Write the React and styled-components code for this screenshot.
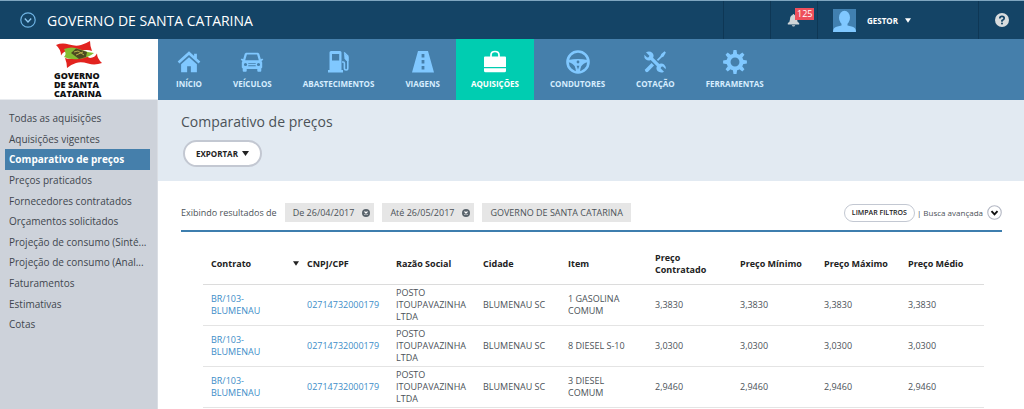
import styled, { createGlobalStyle } from "styled-components";

const COLOR = {
  header: "#144466",
  nav: "#457fab",
  active: "#00cdb1",
  icon: "#80c8ff",
  link: "#3d8dc8",
};

const GlobalStyle = createGlobalStyle`
  * {
    box-sizing: border-box;
  }

  body {
    margin: 0;
    background: #fff;
    color: #4b5258;
    font-family: "Open Sans", "Noto Sans", sans-serif;
    font-size: 10px;
  }

  button {
    font-family: inherit;
    cursor: pointer;
  }

  a {
    text-decoration: none;
  }
`;

const Page = styled.div`
  min-height: 100vh;
  display: flex;
  flex-direction: column;
`;

const Header = styled.header`
  display: flex;
  align-items: stretch;
  height: 39px;
  border-top: 1px solid #7fa6c0;
  background: ${COLOR.header};
  color: #fff;
`;

const IconButton = styled.button`
  display: flex;
  align-items: center;
  justify-content: center;
  padding: 0;
  border: 0;
  background: none;
  color: inherit;
`;

const Organization = styled.div`
  flex: 1;
  display: flex;
  align-items: center;
  gap: 11px;
  padding-left: 20px;
  font-size: 14px;
`;

const HeaderCell = styled.div`
  display: flex;
  align-items: center;
  width: ${(props) => props.$width};
  padding-left: ${(props) => props.$indent || "0"};
  border-left: 1px solid #0e3755;
`;

const BellButton = styled(IconButton)`
  position: relative;
`;

const Badge = styled.span`
  position: absolute;
  top: -5px;
  left: 8px;
  padding: 0 2px;
  background: #ee4f5c;
  color: #fff;
  font-size: 9px;
  line-height: 12px;
`;

const UserButton = styled(IconButton)`
  gap: 7px;
  font-size: 8px;
  font-weight: 700;
`;

const UserName = styled.span`
  padding-left: 4px;
`;

const Top = styled.div`
  display: flex;
  height: 61px;
  background: ${COLOR.nav};
`;

const Logo = styled.div`
  display: flex;
  flex-direction: column;
  align-items: center;
  gap: 2px;
  flex: 0 0 158px;
  padding-top: 1px;
  border-bottom: 1px solid #e8ebef;
  background: #fff;
  color: #111;
  font-size: 9px;
  font-weight: 800;
  line-height: 9px;
`;

const LogoText = styled.div`
  width: 50px;
  white-space: nowrap;
`;

const Nav = styled.nav`
  display: flex;
  gap: 1px;
  padding-left: 3px;
`;

const NavLink = styled.a`
  display: flex;
  flex-direction: column;
  align-items: center;
  gap: 3px;
  padding: 10px 15px 0;
  color: ${(props) => (props.$active ? "#fff" : "#d6edff")};
  font-size: 8px;
  font-weight: 700;
  line-height: 12px;
  background: ${(props) => (props.$active ? COLOR.active : "transparent")};

  svg {
    color: ${(props) => (props.$active ? "#fff" : COLOR.icon)};
  }
`;

const Body = styled.div`
  flex: 1;
  display: flex;
`;

const Sidebar = styled.aside`
  flex: 0 0 158px;
  padding: 8px 7px 0 5px;
  border-right: 1px solid #d9dde3;
  background: #cdd2da;
`;

const SideList = styled.ul`
  display: grid;
  grid-auto-rows: 1fr;
  height: 227px;
  margin: 0;
  padding: 0;
  list-style: none;
`;

const SideItem = styled.li`
  display: flex;
  min-width: 0;
`;

const SideLink = styled.a`
  flex: 1;
  padding: 0 0 0 4px;
  overflow: hidden;
  text-overflow: ellipsis;
  white-space: nowrap;
  line-height: 20px;
  color: ${(props) => (props.$active ? "#fff" : "#3f464e")};
  font-weight: ${(props) => (props.$active ? 700 : 400)};
  background: ${(props) => (props.$active ? COLOR.nav : "transparent")};
`;

const Main = styled.main`
  flex: 1;
  min-width: 0;
`;

const TitleArea = styled.div`
  height: 81px;
  padding: 12px 23px 0;
  background: #e2eaf2;
`;

const Title = styled.h1`
  margin: 0 0 8px;
  font-size: 14px;
  font-weight: 400;
  line-height: 20px;
`;

const PillButton = styled.button`
  height: ${(props) => (props.$small ? "18px" : "27px")};
  padding: ${(props) => (props.$small ? "0 7px" : "0 11px")};
  border: ${(props) => (props.$small ? "1px" : "2px")} solid #c3c8d2;
  border-radius: 14px;
  background: #fff;
  color: #222;
  font-size: ${(props) => (props.$small ? "7px" : "8px")};
  font-weight: ${(props) => (props.$small ? 600 : 700)};
`;

const ExportButton = styled(PillButton)`
  display: flex;
  align-items: center;
  gap: 4px;
  margin-left: 2px;
`;

const Results = styled.section`
  padding: 22px 22px 0 23px;
`;

const Filters = styled.div`
  display: flex;
  align-items: center;
  gap: 8px;
  padding-bottom: 8px;
  border-bottom: 2px solid #3d7eae;
  font-size: 9px;
`;

const Tag = styled.span`
  display: flex;
  align-items: center;
  gap: 8px;
  height: 19px;
  padding: ${(props) => (props.$plain ? "0 8px" : "0 4px 0 8px")};
  background: #e6e6e6;
`;

const FilterActions = styled.div`
  display: flex;
  align-items: center;
  gap: 2px;
  margin-left: auto;
  font-size: 8px;
`;

const SearchButton = styled(IconButton)`
  gap: 4px;
  font-size: 8px;
`;

const TableWrapper = styled.div`
  padding: 12px 18px 0 22px;
`;

const Table = styled.table`
  width: 100%;
  table-layout: fixed;
  border-collapse: separate;
  border-spacing: 0;
  font-size: 9px;
  line-height: 12px;
`;

const HeadCell = styled.th`
  width: ${(props) => props.$width};
  height: 41px;
  padding: 0 0 1px 8px;
  border-bottom: 1px solid #dcdcdc;
  color: #222;
  text-align: left;
  font-weight: 700;
`;

const Sort = styled.span`
  display: flex;
  align-items: center;
  justify-content: space-between;
`;

const Cell = styled.td`
  height: 41px;
  padding: 2px 8px;
  border-bottom: 1px solid #e4e4e4;
`;

const TableLink = styled.a`
  color: ${COLOR.link};
`;

const Svg = ({ viewBox = "0 0 26 26", children }) => (
  <svg width="26" height="26" viewBox={viewBox} fill="currentColor" aria-hidden="true">
    {children}
  </svg>
);

// a bit of air around the wider glyphs
const LOOSE = "-1 -1 28 28";

const Arrow = ({ width = 7, height = 5 }) => (
  <svg width={width} height={height} viewBox="0 0 7 5" fill="currentColor" aria-hidden="true">
    <path d="M0 0h7L3.5 5z" />
  </svg>
);

const HomeIcon = () => (
  <Svg viewBox={LOOSE}>
    <path d="M13 1.500.8 12.500l1.900 2.200L13 5.500l10.300 9.200 1.900-2.200-3.700-3.300V4h-3v2.500z" />
    <path d="M13 7.800 4.500 15.300V24H11v-6.500h4V24h6.500v-8.700z" />
  </Svg>
);

const CarIcon = () => (
  <Svg viewBox={LOOSE}>
    <path
      fillRule="evenodd"
      d="M6.500 3h13l1.300 1 1.700 6 1.500-.8 1.200 1.400-1.900 1.200.7 1.700v5.500l-1 1V22.500a1 1 0 0 1-1 1h-2.300a1 1 0 0 1-1-1v-2H7.300v2a1 1 0 0 1-1 1H4a1 1 0 0 1-1-1V20l-1-1v-5.500l.7-1.700L.8 10.600 2 9.200l1.500.8 1.700-6zM7.500 4.800 5.700 11.200h14.600l-1.800-6.400zM6 14a1.700 1.700 0 1 0 0 3.400A1.700 1.700 0 0 0 6 14zm14 0a1.700 1.700 0 1 0 0 3.400 1.700 1.700 0 0 0 0-3.400zM9 14v1h8v-1zm0 2.500v1h8v-1z"
    />
  </Svg>
);

const FuelIcon = () => (
  <Svg>
    <path fillRule="evenodd" d="M3.500 3.500q0-1.500 1.500-1.500h9q1.500 0 1.500 1.500V21H17v2.500H2V21h1.500zM6 5v6.500h7.200V5z" />
    <path
      d="M16 13h1.200q1.200 0 1.200 1.500v4.800q0 1.700 1.700 1.700t1.700-1.700V7l-3.700-3.500"
      fill="none"
      stroke="currentColor"
      strokeWidth="1.600"
    />
    <path d="M18 4.500 22.500 8v4h-2l-2-2.200z" />
  </Svg>
);

const RoadIcon = () => (
  <Svg>
    <path
      fillRule="evenodd"
      d="M8 2h10l6 21.500H2zM11.600 5v3.500h2.800V5zm0 6v3.500h2.800V11zm0 6v3.500h2.800V17z"
    />
  </Svg>
);

const BagIcon = () => (
  <Svg>
    <path d="M9 8V6q0-3.500 4-3.500T17 6v2" fill="none" stroke="currentColor" strokeWidth="1.700" />
    <path d="M3 7.500h20q1 0 1 1V18H2V8.500q0-1 1-1zM2 19.300h22v2.500q0 1.500-1.500 1.500h-19Q2 23.300 2 21.800z" />
  </Svg>
);

const WheelIcon = () => (
  <Svg viewBox={LOOSE}>
    <circle cx="13" cy="13" r="11.300" fill="none" stroke="currentColor" strokeWidth="2.800" />
    <path
      fillRule="evenodd"
      d="M2.500 10.800q10.500-2 21 0v2.400q-5 1-7 4.500-1 2-1.200 6h-4.600q-.2-4-1.200-6-2-3.500-7-4.500zM13 11.500a1.500 1.500 0 1 0 0 3 1.500 1.500 0 0 0 0-3zM11.500 17l1.500 4 1.500-4z"
    />
  </Svg>
);

const ToolsIcon = () => (
  <Svg viewBox={LOOSE}>
    <path d="m7.500 7.500 11 11" stroke="currentColor" strokeWidth="3.600" />
    <path d="M3.300 2.600 7 6.200l-.8 1.600-1.700.4L1.500 5.100Q1 8.500 3.200 10.400q2.200 1.700 4.800.8l3.300-3.200q.8-2.800-1-4.700Q7 .5 3.300 2.600z" />
    <path d="m22.700 23.400-3.700-3.600.8-1.600 1.700-.4 3 3.100q.5-3.400-1.700-5.300-2.200-1.700-4.800-.8L14.700 18q-.8 2.800 1 4.700 3.300 2.800 7 .7z" />
    <path d="m23.300 1.300 1.400 1.400-2.400 4.400-2.200 1-3.800 3.800-1.300-1.300 3.700-3.800 1.100-2.500z" />
    <path d="m9.300 14.200 2.700 2.600-6.500 6.700q-1.400 1-2.700-.3-1.200-1.300-.2-2.500z" />
  </Svg>
);

const GearIcon = () => (
  <Svg viewBox={LOOSE}>
    <circle cx="13" cy="13" r="7" fill="none" stroke="currentColor" strokeWidth="4.400" />
    {[0, 45, 90, 135, 180, 225, 270, 315].map((angle) => (
      <path key={angle} d="M10.600 5 11.400.2h3.200l.8 4.800z" transform={`rotate(${angle} 13 13)`} />
    ))}
  </Svg>
);

const ChevronCircle = ({ ring, mark, size, fill = "none", weight = 1.3 }) => (
  <svg width={size} height={size} viewBox="0 0 16 16" fill="none" aria-hidden="true">
    <circle cx="8" cy="8" r="7.200" fill={fill} stroke={ring} strokeWidth="1.200" />
    <path d="m4.800 6.500 3.200 3.500 3.200-3.500" stroke={mark} strokeWidth={weight} />
  </svg>
);

const FlagLogo = () => (
  <svg width="46" height="29" viewBox="0 0 46 29" aria-hidden="true">
    <path d="M0 5q6-2.500 13-.5T25 5t9-4q0 5 2 10-6-2-12 .5-8 2-13-.5-4 .5-6 4.500 0-6-5-10.500z" fill="#e2231f" />
    <path d="M46 23q-7 2.500-14 .5t-12-.5-9 5q0-5-2-10 6 2 12-.5 8-2 13 .5 5-.5 7-4.500 0 5 5 9.500z" fill="#e2231f" />
    <path d="M8 9q8-3 15 0t15 4q-6 5-15 6T8 17q3-3 0-8z" fill="#84bd32" />
    <path d="m15 13 5-4.500 11 3.500-1 5-7 2z" fill="#4c4a22" />
    <path d="m18 12 4-1 6 4M20 15l7-3" stroke="#b8b04a" strokeWidth="1" fill="none" />
  </svg>
);

const BellIcon = () => (
  <svg width="13" height="14" viewBox="0 0 14 16" fill="#cfd5d8" aria-hidden="true">
    <path d="M7 1Q8 1 8 2.200 11 3 11 7q0 3 2.500 4.500V13H.5v-1.500Q3 10 3 7q0-4 3-4.800Q6 1 7 1zM5 14h4q-.5 1.500-2 1.500T5 14z" />
  </svg>
);

const Avatar = () => (
  <svg width="23" height="23" viewBox="0 0 23 23" aria-hidden="true">
    <path d="M0 0h23v23H0z" fill="#4180b0" />
    <ellipse cx="11.500" cy="8.700" rx="5.500" ry="7" fill="#80c8ff" />
    <path d="M8.500 13h6v3.500l5 1.200q3.500 1 3.500 5.300H0q0-4.300 3.500-5.300l5-1.200z" fill="#80c8ff" />
  </svg>
);

const HelpIcon = () => (
  <svg width="14" height="14" viewBox="0 0 14 14" aria-hidden="true">
    <circle cx="7" cy="7" r="7" fill="#d8dcde" />
    <path d="M4.800 5.500q0-2.200 2.200-2.200t2.200 1.900Q9.200 6.500 7 7.500v1.200" fill="none" stroke={COLOR.header} strokeWidth="1.700" />
    <circle cx="7" cy="10.600" r="1" fill={COLOR.header} />
  </svg>
);

const RemoveIcon = () => (
  <svg width="8" height="8" viewBox="0 0 8 8" aria-hidden="true">
    <circle cx="4" cy="4" r="4" fill="#59636b" />
    <path d="m2.500 2.500 3 3m0-3-3 3" stroke="#fff" strokeWidth="1.100" />
  </svg>
);

const navItems = [
  { label: "INÍCIO", Icon: HomeIcon },
  { label: "VEÍCULOS", Icon: CarIcon },
  { label: "ABASTECIMENTOS", Icon: FuelIcon },
  { label: "VIAGENS", Icon: RoadIcon },
  { label: "AQUISIÇÕES", Icon: BagIcon, active: true },
  { label: "CONDUTORES", Icon: WheelIcon },
  { label: "COTAÇÃO", Icon: ToolsIcon },
  { label: "FERRAMENTAS", Icon: GearIcon },
];

const sideItems = [
  "Todas as aquisições",
  "Aquisições vigentes",
  "Comparativo de preços",
  "Preços praticados",
  "Fornecedores contratados",
  "Orçamentos solicitados",
  "Projeção de consumo (Sinté...",
  "Projeção de consumo (Anal...",
  "Faturamentos",
  "Estimativas",
  "Cotas",
];

const columns = [
  { label: "Contrato", width: "96px", sorted: true },
  { label: "CNPJ/CPF", width: "89px" },
  { label: "Razão Social", width: "87px" },
  { label: "Cidade", width: "85px" },
  { label: "Item", width: "87px" },
  { label: "Preço Contratado", width: "85px" },
  { label: "Preço Mínimo", width: "84px" },
  { label: "Preço Máximo", width: "84px" },
  { label: "Preço Médio", width: "84px" },
];

const rows = [
  { id: 1, item: "1 GASOLINA COMUM", price: "3,3830" },
  { id: 2, item: "8 DIESEL S-10", price: "3,0300" },
  { id: 3, item: "3 DIESEL COMUM", price: "2,9460" },
];

function PriceTable() {
  return (
    <Table>
      <thead>
        <tr>
          {columns.map((column) => (
            <HeadCell key={column.label} $width={column.width} scope="col">
              {column.sorted ? (
                <Sort>
                  {column.label}
                  <Arrow width={6} />
                </Sort>
              ) : (
                column.label
              )}
            </HeadCell>
          ))}
        </tr>
      </thead>
      <tbody>
        {rows.map((row) => (
          <tr key={row.id}>
            <Cell>
              <TableLink href="#contrato">
                BR/103-
                <br />
                BLUMENAU
              </TableLink>
            </Cell>
            <Cell>
              <TableLink href="#fornecedor">02714732000179</TableLink>
            </Cell>
            <Cell>POSTO ITOUPAVAZINHA LTDA</Cell>
            <Cell>BLUMENAU SC</Cell>
            <Cell>{row.item}</Cell>
            <Cell>{row.price}</Cell>
            <Cell>{row.price}</Cell>
            <Cell>{row.price}</Cell>
            <Cell>{row.price}</Cell>
          </tr>
        ))}
      </tbody>
    </Table>
  );
}

export default function App() {
  return (
    <Page>
      <GlobalStyle />
      <Header>
        <Organization>
          <IconButton aria-label="Trocar organização">
            <ChevronCircle size={16} ring="#6fb4e4" mark="#8fc9f2" />
          </IconButton>
          GOVERNO DE SANTA CATARINA
        </Organization>
        <HeaderCell $width="47px" />
        <HeaderCell $width="47px" $indent="16px">
          <BellButton aria-label="Notificações">
            <BellIcon />
            <Badge>125</Badge>
          </BellButton>
        </HeaderCell>
        <HeaderCell $width="161px" $indent="15px">
          <UserButton>
            <Avatar />
            <UserName>GESTOR</UserName>
            <Arrow width={6} />
          </UserButton>
        </HeaderCell>
        <HeaderCell $width="46px" $indent="16px">
          <IconButton aria-label="Ajuda">
            <HelpIcon />
          </IconButton>
        </HeaderCell>
      </Header>
      <Top>
        <Logo>
          <FlagLogo />
          <LogoText>
            GOVERNO
            <br />
            DE SANTA
            <br />
            CATARINA
          </LogoText>
        </Logo>
        <Nav>
          {navItems.map(({ label, Icon, active }) => (
            <NavLink key={label} href="#menu" $active={active}>
              <Icon />
              {label}
            </NavLink>
          ))}
        </Nav>
      </Top>
      <Body>
        <Sidebar>
          <SideList>
            {sideItems.map((label) => (
              <SideItem key={label}>
                <SideLink href="#lista" $active={label === "Comparativo de preços"}>
                  {label}
                </SideLink>
              </SideItem>
            ))}
          </SideList>
        </Sidebar>
        <Main>
          <TitleArea>
            <Title>Comparativo de preços</Title>
            <ExportButton>
              EXPORTAR
              <Arrow />
            </ExportButton>
          </TitleArea>
          <Results>
            <Filters>
              Exibindo resultados de
              <Tag>
                De 26/04/2017
                <IconButton aria-label="Remover data inicial">
                  <RemoveIcon />
                </IconButton>
              </Tag>
              <Tag>
                Até 26/05/2017
                <IconButton aria-label="Remover data final">
                  <RemoveIcon />
                </IconButton>
              </Tag>
              <Tag $plain>GOVERNO DE SANTA CATARINA</Tag>
              <FilterActions>
                <PillButton $small>LIMPAR FILTROS</PillButton>|
                <SearchButton>
                  Busca avançada
                  <ChevronCircle size={15} ring="#b4b8c4" mark="#111" fill="#fff" weight={2} />
                </SearchButton>
              </FilterActions>
            </Filters>
            <TableWrapper>
              <PriceTable />
            </TableWrapper>
          </Results>
        </Main>
      </Body>
    </Page>
  );
}
